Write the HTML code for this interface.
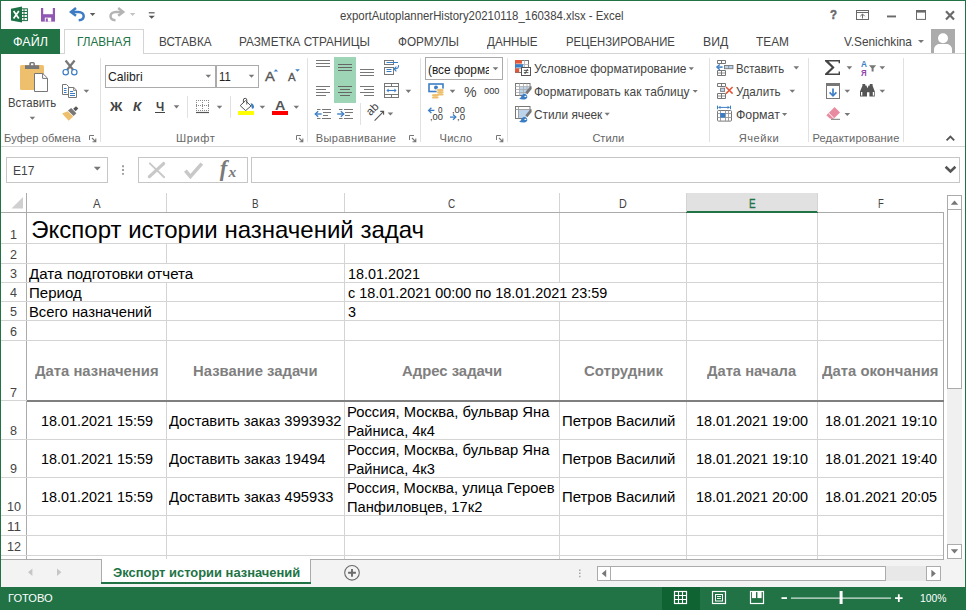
<!DOCTYPE html>
<html><head><meta charset="utf-8"><title>Excel</title>
<style>
*{box-sizing:border-box;margin:0;padding:0}
html,body{width:966px;height:610px;overflow:hidden;background:#fff}
body{font-family:"Liberation Sans",sans-serif;position:relative}
.t{position:absolute;white-space:nowrap;transform-origin:0 50%}
.r{position:absolute;display:block}
.w{position:absolute;font-size:14.67px;line-height:19px;color:#000;white-space:normal}
</style></head><body>
<div class="r" style="left:0px;top:0px;width:966px;height:1px;background:#217346;"></div>
<div class="r" style="left:0px;top:0px;width:1px;height:610px;background:#217346;"></div>
<div class="r" style="left:965px;top:0px;width:1px;height:610px;background:#217346;"></div>
<div class="t" style="left:340.20px;top:6.17px;font-size:12.5px;line-height:20px;color:#444;transform:scaleX(0.9117);">exportAutoplannerHistory20210118_160384.xlsx - Excel</div>
<div class="r" style="left:1px;top:53px;width:964px;height:1px;background:#d4d4d4;"></div>
<div class="r" style="left:1px;top:29px;width:59px;height:25px;background:#217346;"></div>
<div class="t" style="left:12.70px;top:31.70px;font-size:12.4px;line-height:20px;color:#fff;transform:scaleX(1.0130);">ФАЙЛ</div>
<div class="r" style="left:64px;top:29px;width:80px;height:25px;background:#fff;border:1px solid #d4d4d4;border-bottom:none"></div>
<div class="t" style="left:76.70px;top:31.70px;font-size:12.4px;line-height:20px;color:#217346;transform:scaleX(0.9482);">ГЛАВНАЯ</div>
<div class="t" style="left:158.70px;top:31.70px;font-size:12.4px;line-height:20px;color:#444;transform:scaleX(0.9467);">ВСТАВКА</div>
<div class="t" style="left:239.40px;top:31.70px;font-size:12.4px;line-height:20px;color:#444;transform:scaleX(0.9491);">РАЗМЕТКА СТРАНИЦЫ</div>
<div class="t" style="left:398.40px;top:31.70px;font-size:12.4px;line-height:20px;color:#444;transform:scaleX(0.9504);">ФОРМУЛЫ</div>
<div class="t" style="left:487.10px;top:31.70px;font-size:12.4px;line-height:20px;color:#444;transform:scaleX(0.9387);">ДАННЫЕ</div>
<div class="t" style="left:565.70px;top:31.70px;font-size:12.4px;line-height:20px;color:#444;transform:scaleX(0.9138);">РЕЦЕНЗИРОВАНИЕ</div>
<div class="t" style="left:702.70px;top:31.70px;font-size:12.4px;line-height:20px;color:#444;transform:scaleX(0.9858);">ВИД</div>
<div class="t" style="left:755.70px;top:31.70px;font-size:12.4px;line-height:20px;color:#444;transform:scaleX(0.9558);">TEAM</div>
<div class="t" style="left:844.40px;top:31.70px;font-size:12.4px;line-height:20px;color:#444;transform:scaleX(0.9538);">V.Senichkina</div>
<svg class="r" style="left:918.0px;top:40.0px" width="6" height="3.0" viewBox="0 0 6 3.0"><path d="M0 0H6L3.0 3.0Z" fill="#777"/></svg>
<svg class="r" style="left:931px;top:29px" width="24" height="24" viewBox="0 0 24 24"><rect width="24" height="24" fill="#ababab"/><circle cx="12" cy="9.2" r="5" fill="#fff"/><path d="M3 24v-3.5c0-3.5 3-5.5 6-5.5h6c3 0 6 2 6 5.5V24z" fill="#fff"/></svg>
<div class="t" style="left:830.00px;top:5.19px;font-size:13.6px;line-height:20px;color:#6a6a6a;font-weight:bold;transform:scaleX(0.8421);-webkit-text-stroke:.5px #6a6a6a;">?</div>
<svg class="r" style="left:0;top:0" width="966" height="30" viewBox="0 0 966 30"><rect x="19" y="8.8" width="8.4" height="11.8" fill="#fff" stroke="#1e7145" stroke-width="1"/><path d="M21 11.500H27M21 14.500H27M21 17.500H27M24 9V20.500" stroke="#1e7145" stroke-width="1" fill="none"/><path d="M11 8.700L22 6.600V22.600L11 20.500Z" fill="#1e7145"/><path d="M13.600 11L18.800 18.400M18.800 11L13.600 18.400" stroke="#fff" stroke-width="1.700" fill="none"/><rect x="41" y="8" width="14" height="13.600" fill="#9156b4"/><rect x="43.200" y="8" width="9.600" height="6.200" fill="#fff"/><rect x="44.800" y="17.600" width="6.400" height="4" fill="#fff"/><rect x="45.800" y="18.400" width="2" height="3.200" fill="#9156b4"/><path d="M72.400 11.900H78.400c3.400 0 5.300 2 5.300 4.300c0 2.300-1.800 3.800-5 4" stroke="#3d7cc4" stroke-width="2.500" fill="none"/><path d="M76 8L71 11.900L76 15.800" stroke="#3d7cc4" stroke-width="2.500" fill="none"/><path d="M89.800 13H95.400L92.600 15.900Z" fill="#5a5a5a"/><path d="M121.800 11.900H115.800c-3.400 0-5.300 2-5.300 4.300c0 2.300 1.800 3.800 5 4" stroke="#b4b4b4" stroke-width="2.500" fill="none"/><path d="M118.200 8L123.200 11.900L118.200 15.800" stroke="#b4b4b4" stroke-width="2.500" fill="none"/><path d="M129.800 13H135.400L132.600 15.900Z" fill="#c4c4c4"/><path d="M148.800 12.800H154.600" stroke="#555" stroke-width="1.200"/><path d="M148.600 15.800H154.800L151.700 18.800Z" fill="#555"/><rect x="856.500" y="10.500" width="12" height="9" fill="#fff" stroke="#6a6a6a" stroke-width="1"/><path d="M856.500 12.500H868.500M862.500 18.500V14.200M860.300 16.200L862.500 14L864.700 16.200" stroke="#6a6a6a" stroke-width="1" fill="none"/><rect x="887" y="15.500" width="9" height="1.900" fill="#6a6a6a"/><rect x="916.500" y="11" width="9" height="8.400" fill="#fff" stroke="#6a6a6a" stroke-width="1"/><rect x="916" y="10" width="10" height="2.600" fill="#6a6a6a"/><path d="M946 11.200L954 19.400M954 11.200L946 19.400" stroke="#6a6a6a" stroke-width="2.200" fill="none"/></svg>
<div class="r" style="left:1px;top:146px;width:964px;height:1px;background:#d4d4d4;"></div>
<div class="r" style="left:100px;top:58px;width:1px;height:84px;background:#e1e1e1;"></div>
<div class="r" style="left:307px;top:58px;width:1px;height:84px;background:#e1e1e1;"></div>
<div class="r" style="left:420px;top:58px;width:1px;height:84px;background:#e1e1e1;"></div>
<div class="r" style="left:507px;top:58px;width:1px;height:84px;background:#e1e1e1;"></div>
<div class="r" style="left:709px;top:58px;width:1px;height:84px;background:#e1e1e1;"></div>
<div class="r" style="left:808px;top:58px;width:1px;height:84px;background:#e1e1e1;"></div>
<div class="r" style="left:903px;top:58px;width:1px;height:84px;background:#e1e1e1;"></div>
<div class="t" style="left:8.10px;top:92.70px;font-size:12.4px;line-height:20px;color:#444;transform:scaleX(0.9175);">Вставить</div>
<div class="t" style="left:4.00px;top:128.15px;font-size:11.1px;line-height:20px;color:#666;letter-spacing:0.126px;">Буфер обмена</div>
<div class="r" style="left:105px;top:65px;width:111px;height:23px;background:#fff;border:1px solid #ababab"></div>
<div class="r" style="left:216px;top:65px;width:43px;height:23px;background:#fff;border:1px solid #ababab"></div>
<div class="t" style="left:107.70px;top:66.90px;font-size:12.4px;line-height:20px;color:#222;transform:scaleX(0.9851);">Calibri</div>
<div class="t" style="left:219.40px;top:66.90px;font-size:12.4px;line-height:20px;color:#222;transform:scaleX(0.9087);">11</div>
<div class="t" style="left:265.00px;top:67.16px;font-size:13.4px;line-height:20px;color:#555;transform:scaleX(1.0965);-webkit-text-stroke:.35px #555;">A</div>
<div class="t" style="left:288.00px;top:68.20px;font-size:10.4px;line-height:20px;color:#555;transform:scaleX(1.0955);-webkit-text-stroke:.3px #555;">A</div>
<div class="t" style="left:109.80px;top:96.63px;font-size:12.6px;line-height:20px;color:#444;font-weight:bold;transform:scaleX(1.0886);">Ж</div>
<div class="t" style="left:133.00px;top:96.63px;font-size:12.6px;line-height:20px;color:#444;font-weight:bold;font-style:italic;transform:scaleX(1.0710);">К</div>
<div class="t" style="left:155.60px;top:96.63px;font-size:12.6px;line-height:20px;color:#444;font-weight:bold;transform:scaleX(0.9256);">Ч</div>
<div class="r" style="left:155px;top:112px;width:10px;height:1px;background:#444;"></div>
<div class="r" style="left:187px;top:96px;width:1px;height:22px;background:#e1e1e1;"></div>
<div class="r" style="left:230px;top:96px;width:1px;height:22px;background:#e1e1e1;"></div>
<div class="t" style="left:275.20px;top:95.96px;font-size:13.4px;line-height:20px;color:#555;font-weight:bold;transform:scaleX(1.0753);">A</div>
<div class="t" style="left:175.90px;top:128.15px;font-size:11.1px;line-height:20px;color:#666;letter-spacing:0.600px;">Шрифт</div>
<div class="r" style="left:360px;top:103px;width:1px;height:22px;background:#e1e1e1;"></div>
<div class="t" style="left:315.70px;top:128.15px;font-size:11.1px;line-height:20px;color:#666;letter-spacing:0.352px;">Выравнивание</div>
<div class="r" style="left:425px;top:57px;width:78px;height:23px;background:#fff;border:1px solid #ababab"></div>
<div class="r" style="left:427px;top:58px;width:61.5px;height:21px;overflow:hidden">
<div class="t" style="left:0.80px;top:1.53px;font-size:12.6px;line-height:20px;color:#222;transform:scaleX(0.9415);">(все формат</div>
</div>
<div class="t" style="left:464.30px;top:81.83px;font-size:15.2px;line-height:20px;color:#4a4a4a;transform:scaleX(0.9323);">%</div>
<div class="t" style="left:484.30px;top:80.71px;font-size:9.2px;line-height:20px;color:#333;transform:scaleX(1.0037);">000</div>
<div class="t" style="left:437.80px;top:100.12px;font-size:8.3px;line-height:20px;color:#333;transform:scaleX(0.9730);">0</div>
<div class="t" style="left:429.70px;top:107.32px;font-size:8.3px;line-height:20px;color:#333;transform:scaleX(1.1258);">,00</div>
<div class="t" style="left:451.60px;top:100.12px;font-size:8.3px;line-height:20px;color:#333;transform:scaleX(1.1258);">,00</div>
<div class="t" style="left:456.80px;top:107.32px;font-size:8.3px;line-height:20px;color:#333;transform:scaleX(1.1558);">,0</div>
<div class="t" style="left:439.60px;top:128.15px;font-size:11.1px;line-height:20px;color:#666;letter-spacing:0.159px;">Число</div>
<div class="t" style="left:534.00px;top:58.70px;font-size:12.4px;line-height:20px;color:#444;transform:scaleX(0.9674);">Условное форматирование</div>
<div class="t" style="left:534.00px;top:81.70px;font-size:12.4px;line-height:20px;color:#444;transform:scaleX(0.9651);">Форматировать как таблицу</div>
<div class="t" style="left:534.00px;top:104.70px;font-size:12.4px;line-height:20px;color:#444;transform:scaleX(0.9550);">Стили ячеек</div>
<div class="t" style="left:592.40px;top:128.15px;font-size:11.1px;line-height:20px;color:#666;letter-spacing:-0.054px;">Стили</div>
<div class="t" style="left:735.90px;top:58.70px;font-size:12.4px;line-height:20px;color:#444;transform:scaleX(0.9175);">Вставить</div>
<div class="t" style="left:735.90px;top:81.70px;font-size:12.4px;line-height:20px;color:#444;transform:scaleX(0.9427);">Удалить</div>
<div class="t" style="left:735.90px;top:104.70px;font-size:12.4px;line-height:20px;color:#444;transform:scaleX(0.9951);">Формат</div>
<div class="t" style="left:738.80px;top:128.15px;font-size:11.1px;line-height:20px;color:#666;letter-spacing:0.514px;">Ячейки</div>
<div class="t" style="left:861.00px;top:53.55px;font-size:8.8px;line-height:20px;color:#3c7ec5;font-weight:bold;transform:scaleX(0.9278);">А</div>
<div class="t" style="left:861.40px;top:62.65px;font-size:8.8px;line-height:20px;color:#8e44ad;font-weight:bold;transform:scaleX(0.8849);">Я</div>
<div class="t" style="left:812.40px;top:128.15px;font-size:11.1px;line-height:20px;color:#666;letter-spacing:0.192px;">Редактирование</div>
<svg class="r" style="left:0;top:0" width="966" height="150" viewBox="0 0 966 150"><rect x="20" y="65" width="24" height="25" rx="1.6" fill="#eec06e"/><path d="M25 69V65.200h4.300V63.600a1.600 1.600 0 0 1 1.600-1.600h2.400a1.600 1.600 0 0 1 1.600 1.600v1.600h4.300V69z" fill="#777"/><rect x="31" y="63.400" width="2.400" height="1.800" fill="#fff"/><path d="M34.5 73.5h8.3l4.7 4.7v13.3h-13z" fill="#fff" stroke="#777" stroke-width="1"/><path d="M42.6 73.7v4.7h4.7" fill="none" stroke="#777" stroke-width="1"/><path d="M29.60 116.75H35.20L32.40 119.85Z" fill="#777"/><path d="M65.6 60.5L73.4 70.2M74.6 60.5L66.8 70.2" stroke="#777" stroke-width="2.200" fill="none"/><circle cx="65.700" cy="72.200" r="2.700" fill="#fff" stroke="#3c7ec5" stroke-width="1.2"/><circle cx="74.300" cy="72.200" r="2.700" fill="#fff" stroke="#3c7ec5" stroke-width="1.2"/><path d="M62.5 84.5h4l2 2v8h-6z" fill="#fff" stroke="#777" stroke-width="1"/><path d="M68.5 87.5h5.3l2.7 2.7v7.3h-8z" fill="#fff" stroke="#777" stroke-width="1"/><path d="M73.6 87.7v2.7h2.7" fill="none" stroke="#777" stroke-width=".9"/><path d="M64 88.5h2.5M64 90.5h2.5M64 92.5h2.5M70 91.5h3M70 93.5h5M70 95.5h5" stroke="#3c7ec5" stroke-width="1"/><path d="M83.60 89.75H89.20L86.40 92.85Z" fill="#777"/><path d="M62.1 113.6L67.6 111.3L73.2 116.4L68.7 120.8Z" fill="#eec06e"/><path d="M67.9 110.6L71.2 107.9L76.4 113.2L73.6 116.1Z" fill="#777"/><path d="M73.2 108.8L76 106.2L78.3 108.5L75.6 111.3Z" fill="#555"/><path d="M89.5 140.0V135.5H94" fill="none" stroke="#777" stroke-width="1"/><path d="M92 138.0L95.5 141.5M95.8 138.5V141.8H92.5" fill="none" stroke="#777" stroke-width="1.1"/><path d="M205.50 74.75H211.10L208.30 77.85Z" fill="#777"/><path d="M248.70 74.75H254.30L251.50 77.85Z" fill="#777"/><path d="M273.6 71.6L275.9 69.2L278.2 71.6Z" fill="#3c7ec5"/><path d="M295.2 69.3H299.8L297.5 71.7Z" fill="#3c7ec5"/><path d="M173.70 105.35H179.30L176.50 108.45Z" fill="#777"/><path d="M196 100.5h1M198 100.5h1M200 100.5h1M202 100.5h1M204 100.5h1M206 100.5h1M208 100.5h1M196 105.5h1M198 105.5h1M200 105.5h1M202 105.5h1M204 105.5h1M206 105.5h1M208 105.5h1M196 110.5h1M198 110.5h1M200 110.5h1M202 110.5h1M204 110.5h1M206 110.5h1M208 110.5h1M196.5 100v1M196.5 102v1M196.5 104v1M196.5 106v1M196.5 108v1M196.5 110v1M202.5 100v1M202.5 102v1M202.5 104v1M202.5 106v1M202.5 108v1M202.5 110v1M208.5 100v1M208.5 102v1M208.5 104v1M208.5 106v1M208.5 108v1M208.5 110v1" stroke="#8a8a8a" stroke-width="1" fill="none"/><path d="M196 112.5H209" stroke="#555" stroke-width="1.2"/><path d="M216.70 105.75H222.30L219.50 108.85Z" fill="#777"/><path d="M245.6 100.6L251 106L245.6 110.6L240.2 105.6Z" fill="#fff" stroke="#555" stroke-width="1"/><path d="M243.4 103V100a1.7 1.7 0 0 1 3.4 0V104.5" fill="none" stroke="#555" stroke-width="1"/><path d="M250.6 103.2c2 .2 3.4 1.6 3.4 3.4c0 1.4-.6 2.2-1.4 2.2c-1.2 0-1-2.6-1.6-3.8z" fill="#3c7ec5"/><rect x="238" y="111" width="16" height="4" fill="#ffff00"/><path d="M259.60 105.75H265.20L262.40 108.85Z" fill="#777"/><rect x="272" y="111" width="16" height="4" fill="#ff0000"/><path d="M293.50 105.75H299.10L296.30 108.85Z" fill="#777"/><path d="M296.5 140.0V135.5H301" fill="none" stroke="#777" stroke-width="1"/><path d="M299 138.0L302.5 141.5M302.8 138.5V141.8H299.5" fill="none" stroke="#777" stroke-width="1.1"/><rect x="334" y="57" width="22" height="46" fill="#9fd5b7"/><path d="M316 60.5H330M316 63.5H330M316 66.5H330" stroke="#777" stroke-width="1" fill="none"/><path d="M338 64.5H352M338 67.5H352M338 70.5H352" stroke="#666" stroke-width="1" fill="none"/><path d="M360 69.5H374M360 72.5H374M360 75.5H374" stroke="#777" stroke-width="1" fill="none"/><rect x="384.5" y="60.5" width="9" height="4" fill="#fff" stroke="#777"/><rect x="384.5" y="67.5" width="9" height="7" fill="#fff" stroke="#777"/><path d="M386.5 62.5H398M386.5 69.5H391.5M386.5 71.5H391.5" stroke="#3c7ec5" stroke-width="1" fill="none"/><path d="M398.5 65.2c.4 2.6-1.4 3.8-4.2 3.8M396.4 66.7L394 69L396.4 71.3" stroke="#3c7ec5" stroke-width="1.1" fill="none"/><path d="M316 86.5H330M316 89.5H326M316 92.5H330M316 95.5H326" stroke="#777" stroke-width="1" fill="none"/><path d="M338 86.5H352M340 89.5H350M338 92.5H352M340 95.5H350" stroke="#666" stroke-width="1" fill="none"/><path d="M360 86.5H374M364 89.5H374M360 92.5H374M364 95.5H374" stroke="#777" stroke-width="1" fill="none"/><rect x="384.5" y="83.5" width="14" height="14" fill="#fff" stroke="#777"/><path d="M384.5 86.5H398.5M384.5 94.5H398.5M391.5 83.5V86.5M391.5 94.5V97.5" stroke="#777" fill="none"/><path d="M387 90.5H396" stroke="#3c7ec5" stroke-width="1.1"/><path d="M388.6 88.6L386.4 90.5L388.6 92.4ZM394.4 88.6L396.6 90.5L394.4 92.4Z" fill="#3c7ec5"/><path d="M405.60 89.85H411.20L408.40 92.95Z" fill="#777"/><path d="M317 109.5H320.5M317 118.5H320.5M322 109.5H331M322 118.5H331M323 112.5H331M323 115.5H328" stroke="#777" fill="none"/><path d="M316 114H321.6" stroke="#3c7ec5" stroke-width="1.4"/><path d="M318.2 111.2L315.2 114L318.2 116.8" stroke="#3c7ec5" stroke-width="1.3" fill="none"/><path d="M339 109.5H342.5M339 118.5H342.5M344 109.5H353M344 118.5H353M345 112.5H353M345 115.5H350" stroke="#777" fill="none"/><path d="M337.2 114H343" stroke="#3c7ec5" stroke-width="1.4"/><path d="M340.8 111.2L343.8 114L340.8 116.8" stroke="#3c7ec5" stroke-width="1.3" fill="none"/><text x="0" y="0" transform="translate(370.6 116.2) rotate(-45)" font-family="Liberation Sans" font-size="11.4" fill="#3a3a3a">ab</text><path d="M374.6 120.6L383.4 111.6M380.2 111.4H383.6V114.8" stroke="#555" stroke-width="1.1" fill="none"/><path d="M387.60 112.45H393.20L390.40 115.55Z" fill="#777"/><path d="M409.5 140.0V135.5H414" fill="none" stroke="#777" stroke-width="1"/><path d="M412 138.0L415.5 141.5M415.8 138.5V141.8H412.5" fill="none" stroke="#777" stroke-width="1.1"/><path d="M492.70 67.15H498.30L495.50 70.25Z" fill="#777"/><rect x="429" y="84" width="14" height="7.5" fill="#fff" stroke="#3c7ec5" stroke-width="1.6"/><circle cx="436" cy="87.6" r="2" fill="#3c7ec5"/><rect x="436.6" y="88.6" width="7.4" height="7.4" fill="#fff"/><rect x="431.6" y="93" width="7.4" height="6" fill="#fff"/><ellipse cx="440.3" cy="90" rx="3.4" ry="1.2" fill="#eec06e"/><ellipse cx="440.3" cy="92.2" rx="3.4" ry="1.2" fill="#eec06e"/><ellipse cx="440.3" cy="94.4" rx="3.4" ry="1.2" fill="#eec06e"/><ellipse cx="435.3" cy="95.2" rx="3.4" ry="1.2" fill="#eec06e"/><ellipse cx="435.3" cy="97.4" rx="3.4" ry="1.2" fill="#eec06e"/><path d="M449.70 89.85H455.30L452.50 92.95Z" fill="#777"/><path d="M429 110.4H434.4" stroke="#3c7ec5" stroke-width="1.3"/><path d="M431.4 107.8L428.6 110.4L431.4 113" stroke="#3c7ec5" stroke-width="1.3" fill="none"/><path d="M450 117.1H455.6" stroke="#3c7ec5" stroke-width="1.3"/><path d="M453 114.5L455.8 117.1L453 119.7" stroke="#3c7ec5" stroke-width="1.3" fill="none"/><path d="M496.5 140.0V135.5H501" fill="none" stroke="#777" stroke-width="1"/><path d="M499 138.0L502.5 141.5M502.8 138.5V141.8H499.5" fill="none" stroke="#777" stroke-width="1.1"/><rect x="515.5" y="60.5" width="13" height="12" fill="#fff" stroke="#777"/><path d="M515.5 64.5H528.5M515.5 68.5H528.5M524.5 60.5V72.5" stroke="#bbb" fill="none"/><rect x="515" y="60" width="7" height="3.6" fill="#e0573a"/><rect x="515" y="64.2" width="8.2" height="3.4" fill="#3c7ec5"/><rect x="515" y="68.4" width="4.2" height="4" fill="#e0573a"/><rect x="521.5" y="67.5" width="9" height="8" fill="#fff" stroke="#555"/><path d="M523.8 70.4H528.4M523.8 72.6H528.4M527.6 69L524.8 74" stroke="#444" stroke-width=".9" fill="none"/><path d="M688.70 67.35H693.90L691.30 70.25Z" fill="#777"/><rect x="515.5" y="83.5" width="14.5" height="12" fill="#fff" stroke="#777"/><rect x="519.5" y="87" width="10" height="8" fill="#bcd3ec"/><path d="M515.5 86.5H530M515.5 89.5H530M515.5 92.5H530M519.5 83.5V95.5M523.5 83.5V95.5M527 83.5V95.5" stroke="#aaa" stroke-width=".8" fill="none"/><path d="M524.5 96.5L532 87.5V96.5Z" fill="#fff"/><path d="M525.4 92.2L530.6 86L531.6 86.4V89L527.4 94.2Z" fill="#777"/><path d="M519 98.8c1.6-.4 2-1.6 2.8-3.2c1-1.8 3.6-2 4.8-.6c1.4 1.6.8 3.8-1.2 4.2c-2.2.4-4.6.2-6.400-.4z" fill="#3c7ec5"/><ellipse cx="525.4" cy="96.4" rx="1" ry=".7" fill="#fff"/><rect x="515.5" y="106.5" width="14.5" height="12" fill="#fff" stroke="#777"/><rect x="518.5" y="110" width="11" height="8" fill="#bcd3ec"/><path d="M515.5 109.5H530M518.5 106.5V118.5" stroke="#999" stroke-width=".9" fill="none"/><path d="M524.5 119.5L532 110.5V119.5Z" fill="#fff"/><path d="M525.4 115.2L530.6 109L531.6 109.4V112L527.4 117.2Z" fill="#777"/><path d="M519 121.8c1.6-.4 2-1.6 2.8-3.2c1-1.8 3.6-2 4.8-.6c1.4 1.6.8 3.8-1.2 4.2c-2.2.4-4.6.2-6.400-.4z" fill="#3c7ec5"/><ellipse cx="525.4" cy="119.4" rx="1" ry=".7" fill="#fff"/><path d="M692.60 89.95H697.80L695.20 92.85Z" fill="#777"/><path d="M604.60 112.85H609.80L607.20 115.75Z" fill="#777"/><path d="M717.5 60.5h8v3h-8zM721.5 60.5v3" fill="#fff" stroke="#777" stroke-width="1"/><path d="M717.5 70.5h8v5h-8zM721.5 70.5v5" fill="#fff" stroke="#777" stroke-width="1"/><path d="M717.5 73h8" stroke="#777" stroke-width=".8"/><rect x="724.5" y="65.5" width="8.4" height="3.2" fill="#bcd3ec" stroke="#777" stroke-width=".9"/><path d="M728.7 65.5v3.2" stroke="#777" stroke-width=".8"/><path d="M717.8 67.1H722.6" stroke="#3c7ec5" stroke-width="1.5"/><path d="M719.8 64.4L716.9 67.1L719.8 69.8" stroke="#3c7ec5" stroke-width="1.4" fill="none"/><path d="M793.50 66.35H799.10L796.30 69.45Z" fill="#777"/><path d="M717.5 83.5h8v3h-8zM721.5 83.5v3" fill="#fff" stroke="#777" stroke-width="1"/><path d="M717.5 93.5h8v5h-8zM721.5 93.5v5" fill="#fff" stroke="#777" stroke-width="1"/><path d="M717.5 96h8" stroke="#777" stroke-width=".8"/><rect x="720.6" y="88.2" width="4" height="3.2" fill="#bcd3ec" stroke="#777" stroke-width=".9"/><path d="M726 87L732.6 93.6M732.6 87L726 93.6" stroke="#e0573a" stroke-width="1.5" fill="none"/><path d="M789.50 89.75H795.10L792.30 92.85Z" fill="#777"/><path d="M718.5 107.4H729.6M717.5 105.6V109.2M730.5 105.6V109.2" stroke="#3c7ec5" stroke-width="1" fill="none"/><path d="M720.4 105.8L718.4 107.4L720.4 109ZM727.6 105.8L729.600 107.400L727.6 109Z" fill="#3c7ec5"/><rect x="717.5" y="110.5" width="14" height="10.6" rx="1" fill="#fff" stroke="#777"/><path d="M717.5 113.5H731.5M717.5 117.5H731.5M720.500 110.500V121M725.500 110.500V121M728.500 110.500V121" stroke="#999" stroke-width=".9" fill="none"/><rect x="720.2" y="113" width="5" height="4.6" fill="#3c7ec5"/><path d="M782.00 113.05H787.20L784.60 115.95Z" fill="#777"/><path d="M825 60H840V63.2H838.600V61.600H828.600L834.6 67.4L828.4 73.4H838.600V71.600H840V75H825V73.700L831.600 67.4L825 61.2Z" fill="#444"/><path d="M846.60 66.35H852.20L849.40 69.45Z" fill="#777"/><path d="M869 65.2H876.2L873.6 68.2V71.6H871.6V68.2Z" fill="#777"/><path d="M879.50 66.35H885.10L882.30 69.45Z" fill="#777"/><rect x="826.5" y="83.5" width="13" height="15" fill="#fff" stroke="#777"/><rect x="826" y="83" width="14" height="3" fill="#777"/><path d="M833 88.400V95.600" stroke="#3c7ec5" stroke-width="1.7"/><path d="M829.6 92.4L833 95.8L836.4 92.4" stroke="#3c7ec5" stroke-width="1.6" fill="none"/><path d="M844.50 89.75H850.10L847.30 92.85Z" fill="#777"/><path d="M862.4 84h2.800v1.600h1.200l1 2.400h.2l1-2.400h1.200V84h2.800v1.800l2.200 5.600v5.200h-5.400v-4.400h-2.400v4.400H860v-5.200l2.400-5.600z" fill="#555"/><rect x="861" y="92" width="1.300" height="3.600" fill="#fff"/><rect x="872.800" y="92" width="1.300" height="3.600" fill="#fff"/><path d="M879.50 89.75H885.10L882.30 92.85Z" fill="#777"/><path d="M826.4 115.2L834.6 107L840 112.4L833.4 119L829.8 118.600Z" fill="#e98ba0"/><path d="M828.6 113L833.800 118.200" stroke="#fff" stroke-width="1"/><path d="M831 119.300H840" stroke="#777" stroke-width="1"/><path d="M844.50 112.95H850.10L847.30 116.05Z" fill="#777"/><path d="M946.600 140.400L950.400 136.600L954.200 140.400" stroke="#555" stroke-width="1.800" fill="none"/></svg>
<div class="r" style="left:6px;top:157px;width:102px;height:26px;background:#fff;border:1px solid #c6c6c6"></div>
<div class="t" style="left:12.80px;top:161.00px;font-size:12.4px;line-height:20px;color:#444;transform:scaleX(0.9707);">E17</div>
<div class="r" style="left:138px;top:157px;width:110px;height:26px;background:#fff;border:1px solid #c6c6c6"></div>
<div class="r" style="left:251px;top:157px;width:709px;height:26px;background:#fff;border:1px solid #c6c6c6"></div>
<svg class="r" style="left:0;top:150px" width="966" height="40" viewBox="0 150 966 40"><path d="M93.800 166.800H100.800L97.300 170.500Z" fill="#777"/><path d="M123 165.300v1.900M123 169.100v1.900M123 172.900v1.900" stroke="#a0a0a0" stroke-width="2"/><path d="M149.400 176.600L163.600 163.600" stroke="#c8c8c8" stroke-width="3.300" stroke-linecap="round" fill="none"/><path d="M149.800 163.400L164.200 177.200" stroke="#c8c8c8" stroke-width="1.900" stroke-linecap="round" fill="none"/><path d="M185.400 170.600L190.400 176.600L201.800 163.600" stroke="#c8c8c8" stroke-width="3.600" fill="none"/><text x="219.800" y="176" font-family="Liberation Serif" font-style="italic" font-weight="bold" font-size="22.500" fill="#7a7a7a">f</text><text x="228.600" y="177.300" font-family="Liberation Serif" font-style="italic" font-weight="bold" font-size="15.500" fill="#7a7a7a">x</text><path d="M945.600 166.800L950.500 171.400L955.400 166.800" stroke="#555" stroke-width="2.600" fill="none"/></svg>
<div class="r" style="left:1px;top:193px;width:944px;height:19px;background:#fff;"></div>
<div class="r" style="left:687px;top:193px;width:130px;height:19px;background:#e1e1e1;"></div>
<div class="t" style="left:92.70px;top:193.93px;font-size:12.9px;line-height:20px;color:#444;transform:scaleX(0.8828);">A</div>
<div class="t" style="left:252.20px;top:193.93px;font-size:12.9px;line-height:20px;color:#444;transform:scaleX(0.7666);">B</div>
<div class="t" style="left:448.40px;top:193.93px;font-size:12.9px;line-height:20px;color:#444;transform:scaleX(0.7732);">C</div>
<div class="t" style="left:619.10px;top:193.93px;font-size:12.9px;line-height:20px;color:#444;transform:scaleX(0.8376);">D</div>
<div class="t" style="left:877.60px;top:193.93px;font-size:12.9px;line-height:20px;color:#444;transform:scaleX(0.7365);">F</div>
<div class="t" style="left:749.00px;top:193.93px;font-size:12.9px;line-height:20px;color:#217346;transform:scaleX(0.7666);-webkit-text-stroke:.3px #217346;">E</div>
<svg class="r" style="left:11px;top:197px" width="13" height="12" viewBox="0 0 13 12"><path d="M12 0V11.500H.500Z" fill="#d0d0d0"/></svg>
<div class="r" style="left:1px;top:212px;width:943px;height:1px;background:#ababab;"></div>
<div class="r" style="left:686px;top:211px;width:132px;height:2px;background:#217346;"></div>
<div class="r" style="left:26px;top:193px;width:1px;height:366px;background:#ababab;"></div>
<div class="r" style="left:166px;top:193px;width:1px;height:19px;background:#d4d4d4;"></div>
<div class="r" style="left:344px;top:193px;width:1px;height:19px;background:#d4d4d4;"></div>
<div class="r" style="left:559px;top:193px;width:1px;height:19px;background:#d4d4d4;"></div>
<div class="r" style="left:686px;top:193px;width:1px;height:19px;background:#d4d4d4;"></div>
<div class="r" style="left:817px;top:193px;width:1px;height:19px;background:#d4d4d4;"></div>
<div class="r" style="left:1px;top:243px;width:943px;height:1px;background:#d4d4d4;"></div>
<div class="r" style="left:1px;top:263px;width:943px;height:1px;background:#d4d4d4;"></div>
<div class="r" style="left:1px;top:282px;width:943px;height:1px;background:#d4d4d4;"></div>
<div class="r" style="left:1px;top:301px;width:943px;height:1px;background:#d4d4d4;"></div>
<div class="r" style="left:1px;top:320px;width:943px;height:1px;background:#d4d4d4;"></div>
<div class="r" style="left:1px;top:340px;width:943px;height:1px;background:#d4d4d4;"></div>
<div class="r" style="left:1px;top:400px;width:943px;height:1px;background:#d4d4d4;"></div>
<div class="r" style="left:1px;top:439px;width:943px;height:1px;background:#d4d4d4;"></div>
<div class="r" style="left:1px;top:477px;width:943px;height:1px;background:#d4d4d4;"></div>
<div class="r" style="left:1px;top:515px;width:943px;height:1px;background:#d4d4d4;"></div>
<div class="r" style="left:1px;top:535px;width:943px;height:1px;background:#d4d4d4;"></div>
<div class="r" style="left:1px;top:555px;width:943px;height:1px;background:#d4d4d4;"></div>
<div class="r" style="left:166px;top:243px;width:1px;height:20px;background:#d4d4d4;"></div>
<div class="r" style="left:166px;top:282px;width:1px;height:277px;background:#d4d4d4;"></div>
<div class="r" style="left:344px;top:243px;width:1px;height:316px;background:#d4d4d4;"></div>
<div class="r" style="left:559px;top:213px;width:1px;height:69px;background:#d4d4d4;"></div>
<div class="r" style="left:559px;top:301px;width:1px;height:258px;background:#d4d4d4;"></div>
<div class="r" style="left:686px;top:213px;width:1px;height:346px;background:#d4d4d4;"></div>
<div class="r" style="left:817px;top:213px;width:1px;height:346px;background:#d4d4d4;"></div>
<div class="r" style="left:943px;top:212px;width:1px;height:347px;background:#ababab;"></div>
<div class="r" style="left:27px;top:400px;width:917px;height:2px;background:#7f7f7f;"></div>
<div class="t" style="left:10.30px;top:224.93px;font-size:13.2px;line-height:20px;color:#444;transform:scaleX(0.9532);">1</div>
<div class="t" style="left:10.30px;top:245.23px;font-size:13.2px;line-height:20px;color:#444;transform:scaleX(0.9532);">2</div>
<div class="t" style="left:10.30px;top:264.43px;font-size:13.2px;line-height:20px;color:#444;transform:scaleX(0.9532);">3</div>
<div class="t" style="left:10.30px;top:283.43px;font-size:13.2px;line-height:20px;color:#444;transform:scaleX(0.9532);">4</div>
<div class="t" style="left:10.30px;top:302.43px;font-size:13.2px;line-height:20px;color:#444;transform:scaleX(0.9532);">5</div>
<div class="t" style="left:10.30px;top:322.43px;font-size:13.2px;line-height:20px;color:#444;transform:scaleX(0.9532);">6</div>
<div class="t" style="left:10.30px;top:382.93px;font-size:13.2px;line-height:20px;color:#444;transform:scaleX(0.9532);">7</div>
<div class="t" style="left:10.30px;top:420.93px;font-size:13.2px;line-height:20px;color:#444;transform:scaleX(0.9532);">8</div>
<div class="t" style="left:10.30px;top:458.93px;font-size:13.2px;line-height:20px;color:#444;transform:scaleX(0.9532);">9</div>
<div class="t" style="left:6.80px;top:496.93px;font-size:13.2px;line-height:20px;color:#444;transform:scaleX(0.9542);">10</div>
<div class="t" style="left:6.80px;top:516.93px;font-size:13.2px;line-height:20px;color:#444;transform:scaleX(1.0217);">11</div>
<div class="t" style="left:6.80px;top:537.23px;font-size:13.2px;line-height:20px;color:#444;transform:scaleX(0.9542);">12</div>
<div class="t" style="left:31.30px;top:219.98px;font-size:24px;line-height:20px;color:#000;">Экспорт истории назначений задач</div>
<div class="t" style="left:28.50px;top:264.12px;font-size:14.67px;line-height:20px;color:#000;transform:scaleX(1.0301);">Дата подготовки отчета</div>
<div class="t" style="left:28.50px;top:283.12px;font-size:14.67px;line-height:20px;color:#000;transform:scaleX(1.0244);">Период</div>
<div class="t" style="left:28.50px;top:302.12px;font-size:14.67px;line-height:20px;color:#000;transform:scaleX(1.0096);">Всего назначений</div>
<div class="t" style="left:347.50px;top:264.12px;font-size:14.67px;line-height:20px;color:#000;transform:scaleX(0.9815);">18.01.2021</div>
<div class="t" style="left:347.50px;top:283.12px;font-size:14.67px;line-height:20px;color:#000;transform:scaleX(0.9829);">с 18.01.2021 00:00 по 18.01.2021 23:59</div>
<div class="t" style="left:347.50px;top:302.12px;font-size:14.67px;line-height:20px;color:#000;transform:scaleX(0.9808);">3</div>
<div class="t" style="left:34.73px;top:361.12px;font-size:14.67px;line-height:20px;color:#7f7f7f;font-weight:bold;transform:scaleX(1.0111);">Дата назначения</div>
<div class="t" style="left:193.23px;top:361.12px;font-size:14.67px;line-height:20px;color:#7f7f7f;font-weight:bold;transform:scaleX(1.0116);">Название задачи</div>
<div class="t" style="left:401.89px;top:361.12px;font-size:14.67px;line-height:20px;color:#7f7f7f;font-weight:bold;transform:scaleX(1.0135);">Адрес задачи</div>
<div class="t" style="left:583.50px;top:361.12px;font-size:14.67px;line-height:20px;color:#7f7f7f;font-weight:bold;transform:scaleX(1.0205);">Сотрудник</div>
<div class="t" style="left:707.45px;top:361.12px;font-size:14.67px;line-height:20px;color:#7f7f7f;font-weight:bold;transform:scaleX(1.0038);">Дата начала</div>
<div class="t" style="left:822.28px;top:361.12px;font-size:14.67px;line-height:20px;color:#7f7f7f;font-weight:bold;transform:scaleX(1.0127);">Дата окончания</div>
<div class="t" style="left:40.50px;top:411.12px;font-size:14.67px;line-height:20px;color:#000;transform:scaleX(0.9815);">18.01.2021 15:59</div>
<div class="t" style="left:168.60px;top:411.12px;font-size:14.67px;line-height:20px;color:#000;transform:scaleX(1.0025);">Доставить заказ 3993932</div>
<div class="t" style="left:347.30px;top:401.92px;font-size:14.67px;line-height:20px;color:#000;transform:scaleX(1.0097);">Россия, Москва, бульвар Яна</div>
<div class="t" style="left:347.30px;top:421.12px;font-size:14.67px;line-height:20px;color:#000;transform:scaleX(0.9958);">Райниса, 4к4</div>
<div class="t" style="left:561.50px;top:411.12px;font-size:14.67px;line-height:20px;color:#000;transform:scaleX(1.0177);">Петров Василий</div>
<div class="t" style="left:696.00px;top:411.12px;font-size:14.67px;line-height:20px;color:#000;transform:scaleX(0.9815);">18.01.2021 19:00</div>
<div class="t" style="left:824.50px;top:411.12px;font-size:14.67px;line-height:20px;color:#000;transform:scaleX(0.9815);">18.01.2021 19:10</div>
<div class="t" style="left:40.50px;top:449.12px;font-size:14.67px;line-height:20px;color:#000;transform:scaleX(0.9815);">18.01.2021 15:59</div>
<div class="t" style="left:168.60px;top:449.12px;font-size:14.67px;line-height:20px;color:#000;transform:scaleX(1.0047);">Доставить заказ 19494</div>
<div class="t" style="left:347.30px;top:439.92px;font-size:14.67px;line-height:20px;color:#000;transform:scaleX(1.0097);">Россия, Москва, бульвар Яна</div>
<div class="t" style="left:347.30px;top:459.12px;font-size:14.67px;line-height:20px;color:#000;transform:scaleX(0.9958);">Райниса, 4к3</div>
<div class="t" style="left:561.50px;top:449.12px;font-size:14.67px;line-height:20px;color:#000;transform:scaleX(1.0177);">Петров Василий</div>
<div class="t" style="left:696.00px;top:449.12px;font-size:14.67px;line-height:20px;color:#000;transform:scaleX(0.9815);">18.01.2021 19:10</div>
<div class="t" style="left:824.50px;top:449.12px;font-size:14.67px;line-height:20px;color:#000;transform:scaleX(0.9815);">18.01.2021 19:40</div>
<div class="t" style="left:40.50px;top:487.12px;font-size:14.67px;line-height:20px;color:#000;transform:scaleX(0.9815);">18.01.2021 15:59</div>
<div class="t" style="left:168.60px;top:487.12px;font-size:14.67px;line-height:20px;color:#000;transform:scaleX(1.0036);">Доставить заказ 495933</div>
<div class="t" style="left:347.30px;top:477.92px;font-size:14.67px;line-height:20px;color:#000;transform:scaleX(1.0069);">Россия, Москва, улица Героев</div>
<div class="t" style="left:347.30px;top:497.12px;font-size:14.67px;line-height:20px;color:#000;transform:scaleX(1.0034);">Панфиловцев, 17к2</div>
<div class="t" style="left:561.50px;top:487.12px;font-size:14.67px;line-height:20px;color:#000;transform:scaleX(1.0177);">Петров Василий</div>
<div class="t" style="left:696.00px;top:487.12px;font-size:14.67px;line-height:20px;color:#000;transform:scaleX(0.9815);">18.01.2021 20:00</div>
<div class="t" style="left:824.50px;top:487.12px;font-size:14.67px;line-height:20px;color:#000;transform:scaleX(0.9815);">18.01.2021 20:05</div>
<div class="r" style="left:947px;top:195px;width:15px;height:364px;background:#f0f0f0;"></div>
<div class="r" style="left:947px;top:195px;width:15px;height:15px;background:#fff;border:1px solid #ababab"></div>
<div class="r" style="left:947px;top:210px;width:15px;height:179px;background:#fff;border:1px solid #ababab;border-top:none"></div>
<div class="r" style="left:947px;top:544px;width:15px;height:15px;background:#fff;border:1px solid #ababab"></div>
<svg class="r" style="left:950px;top:199px" width="9" height="7" viewBox="0 0 9 7"><path d="M.800 5.800L4.500 1.600L8.200 5.800Z" fill="#777"/></svg>
<svg class="r" style="left:950px;top:548px" width="9" height="7" viewBox="0 0 9 7"><path d="M.800 1.200L4.500 5.400L8.200 1.200Z" fill="#777"/></svg>
<div class="r" style="left:1px;top:559px;width:964px;height:28px;background:#f3f3f3;"></div>
<div class="r" style="left:1px;top:559px;width:943px;height:1px;background:#ababab;"></div>
<div class="r" style="left:101px;top:559px;width:210px;height:25px;background:#fff;"></div>
<div class="r" style="left:101px;top:559px;width:1px;height:23px;background:#ababab;"></div>
<div class="r" style="left:310px;top:559px;width:1px;height:23px;background:#ababab;"></div>
<div class="r" style="left:101px;top:582px;width:210px;height:2px;background:#217346;"></div>
<div class="t" style="left:112.60px;top:562.90px;font-size:12.4px;line-height:20px;color:#217346;font-weight:bold;transform:scaleX(1.0429);">Экспорт истории назначений</div>
<svg class="r" style="left:0;top:559px" width="966" height="51" viewBox="0 559 966 51"><path d="M32.400 568.400V576L28 572.200Z" fill="#c6c6c6"/><path d="M57 568.400V576L61.400 572.200Z" fill="#c6c6c6"/><circle cx="352" cy="572.800" r="7.300" fill="#f3f3f3" stroke="#6a6a6a" stroke-width="1.100"/><path d="M348.100 572.800H355.900M352 568.900V576.700" stroke="#6a6a6a" stroke-width="1.900"/><path d="M579.800 569.500V571M579.800 572.600V574.100M579.800 575.700V577.200" stroke="#a0a0a0" stroke-width="1.400"/><rect x="597" y="566" width="344" height="15" fill="#e8e8e8"/><rect x="597.500" y="566.500" width="13" height="14" fill="#fff" stroke="#ababab"/><rect x="610.500" y="566.500" width="275" height="14" fill="#fff" stroke="#ababab"/><rect x="926.500" y="566.500" width="14" height="14" fill="#fff" stroke="#ababab"/><path d="M606.200 569.800V577.200L601.800 573.500Z" fill="#777"/><path d="M931.400 569.800V577.200L935.800 573.500Z" fill="#777"/><rect x="0" y="587" width="966" height="23" fill="#217346"/><rect x="662" y="587" width="38" height="23" fill="#0f6232"/><rect x="674.500" y="591.500" width="12" height="12" fill="none" stroke="#fff" stroke-width="1.200"/><path d="M678.500 591.500V603.500M682.500 591.500V603.500M674.500 595.500H686.500M674.500 599.500H686.500" stroke="#fff" stroke-width="1.100" fill="none"/><rect x="712.500" y="591.500" width="13" height="12" fill="none" stroke="#fff" stroke-width="1.200"/><rect x="715.500" y="594.500" width="7" height="6.500" fill="none" stroke="#fff" stroke-width="1"/><path d="M717 596.500H721M717 598.500H721" stroke="#fff" stroke-width=".900"/><rect x="750.500" y="591.500" width="13" height="12" fill="none" stroke="#fff" stroke-width="1.200"/><rect x="752" y="591.500" width="4" height="6.600" fill="#fff"/><rect x="757.400" y="591.500" width="4.200" height="6.600" fill="#fff"/><rect x="781.500" y="597.200" width="5.500" height="1.800" fill="#fff"/><rect x="791" y="597.600" width="100" height="1" fill="#fff"/><rect x="839.600" y="591" width="3" height="13" fill="#fff"/><path d="M895 598.100H902.600M898.800 594.300V601.900" stroke="#fff" stroke-width="1.800"/></svg>
<div class="t" style="left:7.70px;top:587.95px;font-size:11.4px;line-height:20px;color:#fff;transform:scaleX(0.9764);">ГОТОВО</div>
<div class="t" style="left:919.60px;top:587.88px;font-size:11.6px;line-height:20px;color:#fff;transform:scaleX(0.8936);">100%</div>
<div class="r" style="left:0px;top:0px;width:1px;height:610px;background:#217346;"></div>
<div class="r" style="left:965px;top:0px;width:1px;height:610px;background:#217346;"></div>
</body></html>
